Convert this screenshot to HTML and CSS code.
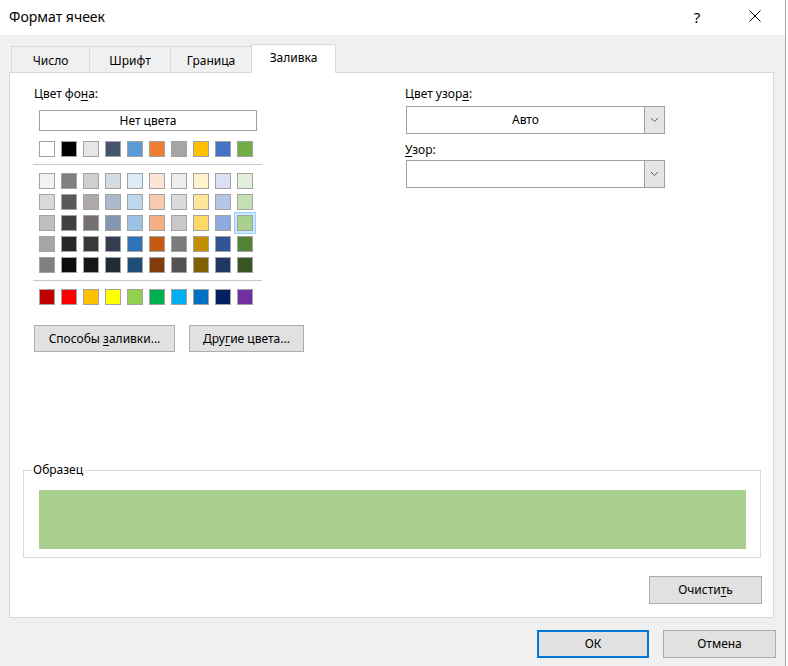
FILE: index.html
```html
<!DOCTYPE html>
<html lang="ru">
<head>
<meta charset="utf-8">
<title>Формат ячеек</title>
<link rel="stylesheet" href="styles.css">
</head>
<body>
<div class="window">
  <header class="titlebar">
    <span class="title">Формат ячеек</span>
    <span class="help">?</span>
    <span class="close"><svg width="12" height="12" viewBox="0 0 12 12"><path d="M0.5 0.5 L11.5 11.5 M11.5 0.5 L0.5 11.5" stroke="#000" stroke-width="1" fill="none"/></svg></span>
  </header>
  <div class="content">
    <nav class="tabs">
      <div class="tab t1">Число</div>
      <div class="tab t2">Шрифт</div>
      <div class="tab t3">Граница</div>
      <div class="tab t4 active">Заливка</div>
    </nav>
    <section class="panel">
      <div class="top">
        <div class="bgcol">
          <div class="label">Цвет фо<u>н</u>а:</div>
          <div class="nocolor">Нет цвета</div>
          <div class="swrow">
            <span class="sw" style="background:#ffffff"></span>
            <span class="sw" style="background:#000000"></span>
            <span class="sw" style="background:#e7e6e6"></span>
            <span class="sw" style="background:#44546a"></span>
            <span class="sw" style="background:#5b9bd5"></span>
            <span class="sw" style="background:#ed7d31"></span>
            <span class="sw" style="background:#a5a5a5"></span>
            <span class="sw" style="background:#ffc000"></span>
            <span class="sw" style="background:#4472c4"></span>
            <span class="sw" style="background:#70ad47"></span>
          </div>
          <div class="sep"></div>
          <div class="grid">
            <span class="sw" style="background:#f2f2f2"></span>
            <span class="sw" style="background:#7f7f7f"></span>
            <span class="sw" style="background:#d0cece"></span>
            <span class="sw" style="background:#d6dce4"></span>
            <span class="sw" style="background:#ddebf7"></span>
            <span class="sw" style="background:#fce4d6"></span>
            <span class="sw" style="background:#ededed"></span>
            <span class="sw" style="background:#fff2cc"></span>
            <span class="sw" style="background:#d9e1f2"></span>
            <span class="sw" style="background:#e2efda"></span>

            <span class="sw" style="background:#d9d9d9"></span>
            <span class="sw" style="background:#595959"></span>
            <span class="sw" style="background:#aeaaaa"></span>
            <span class="sw" style="background:#acb9ca"></span>
            <span class="sw" style="background:#bdd7ee"></span>
            <span class="sw" style="background:#f8cbad"></span>
            <span class="sw" style="background:#dbdbdb"></span>
            <span class="sw" style="background:#ffe699"></span>
            <span class="sw" style="background:#b4c6e7"></span>
            <span class="sw" style="background:#c6e0b4"></span>

            <span class="sw" style="background:#bfbfbf"></span>
            <span class="sw" style="background:#404040"></span>
            <span class="sw" style="background:#757171"></span>
            <span class="sw" style="background:#8497b0"></span>
            <span class="sw" style="background:#9bc2e6"></span>
            <span class="sw" style="background:#f4b084"></span>
            <span class="sw" style="background:#c9c9c9"></span>
            <span class="sw" style="background:#ffd966"></span>
            <span class="sw" style="background:#8ea9db"></span>
            <span class="sw selected" style="background:#a9d08e"></span>

            <span class="sw" style="background:#a6a6a6"></span>
            <span class="sw" style="background:#262626"></span>
            <span class="sw" style="background:#3a3838"></span>
            <span class="sw" style="background:#333f4f"></span>
            <span class="sw" style="background:#2f75b5"></span>
            <span class="sw" style="background:#c65911"></span>
            <span class="sw" style="background:#7b7b7b"></span>
            <span class="sw" style="background:#bf8f00"></span>
            <span class="sw" style="background:#305496"></span>
            <span class="sw" style="background:#548235"></span>

            <span class="sw" style="background:#808080"></span>
            <span class="sw" style="background:#0d0d0d"></span>
            <span class="sw" style="background:#161616"></span>
            <span class="sw" style="background:#222b35"></span>
            <span class="sw" style="background:#1f4e78"></span>
            <span class="sw" style="background:#833c0c"></span>
            <span class="sw" style="background:#525252"></span>
            <span class="sw" style="background:#806000"></span>
            <span class="sw" style="background:#203764"></span>
            <span class="sw" style="background:#375623"></span>
          </div>
          <div class="sep"></div>
          <div class="swrow">
            <span class="sw" style="background:#c00000"></span>
            <span class="sw" style="background:#ff0000"></span>
            <span class="sw" style="background:#ffc000"></span>
            <span class="sw" style="background:#ffff00"></span>
            <span class="sw" style="background:#92d050"></span>
            <span class="sw" style="background:#00b050"></span>
            <span class="sw" style="background:#00b0f0"></span>
            <span class="sw" style="background:#0070c0"></span>
            <span class="sw" style="background:#002060"></span>
            <span class="sw" style="background:#7030a0"></span>
          </div>
        </div>
        <div class="patcol">
          <div class="label">Цвет узор<u>а</u>:</div>
          <div class="select">
            <span class="val">Авто</span>
            <span class="arrow"><svg width="9" height="6" viewBox="0 0 9 6"><path d="M1 1 L4.5 4.5 L8 1" stroke="#606060" stroke-width="1" fill="none"/></svg></span>
          </div>
          <div class="label l2"><u>У</u>зор:</div>
          <div class="select">
            <span class="val"></span>
            <span class="arrow"><svg width="9" height="6" viewBox="0 0 9 6"><path d="M1 1 L4.5 4.5 L8 1" stroke="#606060" stroke-width="1" fill="none"/></svg></span>
          </div>
        </div>
      </div>
      <div class="fillbtns">
        <button class="btn b-fill">Способы <u>з</u>аливки...</button>
        <button class="btn b-more">Дру<u>г</u>ие цвета...</button>
      </div>
      <fieldset class="sample">
        <legend>Образец</legend>
        <div class="preview"></div>
      </fieldset>
      <div class="clearrow"><button class="btn b-clear">Очисти<u>т</u>ь</button></div>
    </section>
    <footer class="footer">
      <button class="btn ok">ОК</button>
      <button class="btn cancel">Отмена</button>
    </footer>
  </div>
</div>
</body>
</html>
```

FILE: styles.css
```css
* { box-sizing: border-box; }
html, body { margin: 0; padding: 0; background: #ffffff; }
body {
  font-family: "Noto Sans", "Open Sans", sans-serif;
  font-size: 12px;
  color: #000;
}
u { text-decoration: underline; text-underline-offset: 2px; }

.window {
  width: 786px;
  height: 666px;
  overflow: hidden;
  background: #f0f0f0;
  border-right: 1px solid #a8a8a8;
  display: flex;
  flex-direction: column;
}

.titlebar {
  height: 35px;
  background: #ffffff;
  display: flex;
  align-items: center;
  padding-left: 9px;
  flex: none;
}
.title { flex: 1; font-size: 14px; line-height: 20px; margin-top: -1px; }
.help { width: 14px; text-align: center; font-size: 15px; line-height: 20px; margin-right: 45px; margin-top: -1px; }
.close { width: 12px; height: 12px; margin-right: 24px; margin-bottom: 3px; display: flex; }

.content { padding-top: 9px; flex: 1; display: flex; flex-direction: column; }

.tabs {
  display: flex;
  align-items: flex-start;
  height: 29px;
  margin-left: 11px;
  margin-bottom: -1px;
}
.tab {
  height: 26px;
  margin-top: 2px;
  border: 1px solid #d9d9d9;
  border-bottom: none;
  background: #f0f0f0;
  display: flex;
  align-items: center;
  justify-content: center;
  line-height: 16px;
  padding-top: 2px;
}
.t1 { width: 79px; }
.t2 { width: 82px; margin-left: -1px; }
.t3 { width: 82px; margin-left: -1px; }
.t4 { width: 85px; margin-left: -1px; }
.tab.active {
  height: 29px;
  margin-top: 0;
  background: #ffffff;
  position: relative;
  z-index: 1;
  padding-top: 0;
  padding-bottom: 2px;
}

.panel {
  margin-left: 9px;
  width: 765px;
  height: 546px;
  border: 1px solid #d9d9d9;
  background: #ffffff;
  display: flex;
  flex-direction: column;
  padding: 13px 0 13px 0;
}

.top {
  display: grid;
  grid-template-columns: 371px 260px;
  padding-left: 24px;
}
.label { height: 16px; line-height: 16px; }

.nocolor {
  margin: 8px 0 0 5px;
  width: 218px;
  height: 21px;
  border: 1px solid #a0a0a0;
  text-align: center;
  line-height: 19px;
}
.swrow {
  display: flex;
  gap: 6px;
  padding-left: 5px;
  margin-top: 10px;
}
.sep + .swrow { margin-top: 8px; }
.sw {
  width: 16px;
  height: 16px;
  border: 1px solid #a3a3a3;
  display: block;
}
.sw.selected {
  box-shadow: 0 0 0 2px #cce8ff, 0 0 0 3px #99d1ff;
}
.sep {
  margin: 7px 0 0 -1px;
  width: 229px;
  height: 1px;
  background: #c8c8c8;
}
.grid {
  display: grid;
  grid-template-columns: repeat(10, 16px);
  column-gap: 6px;
  row-gap: 5px;
  padding-left: 5px;
  margin-top: 8px;
}

.patcol { display: flex; flex-direction: column; }
.select {
  margin: 4px 0 0 1px;
  width: 259px;
  height: 28px;
  border: 1px solid #a0a0a0;
  display: flex;
  background: #ffffff;
}
.l2 { margin-top: 8px; }
.l2 + .select { margin-top: 2px; }
.val { flex: 1; text-align: center; line-height: 26px; }
.arrow {
  width: 20px;
  background: #e5e5e5;
  border-left: 1px solid #a0a0a0;
  display: flex;
  align-items: center;
  justify-content: center;
}

.btn {
  font-family: inherit;
  font-size: 12px;
  color: #000;
  background: #e1e1e1;
  border: 1px solid #adadad;
  padding: 0;
  height: 28px;
  line-height: 16px;
}
.fillbtns {
  display: flex;
  gap: 14px;
  margin: 20px 0 0 24px;
}
.b-fill { width: 141px; height: 27px; }
.b-more { width: 115px; height: 27px; }

.sample {
  margin: auto 0 0 13px;
  width: 738px;
  border: 1px solid #dcdcdc;
  padding: 0 14px 8px 15px;
  min-width: 0;
}
.sample legend {
  padding: 0 1px;
  margin-left: -7px;
  line-height: 16px;
  font-size: 12px;
}
.preview {
  margin-top: 12px;
  height: 59px;
  background: #a9d08e;
}
.clearrow {
  display: flex;
  justify-content: flex-end;
  margin: 18px 11px 0 0;
}
.b-clear { width: 113px; }

.footer {
  display: flex;
  justify-content: flex-end;
  gap: 14px;
  margin-top: 12px;
  padding-right: 9px;
}
.ok { width: 112px; border: 2px solid #0078d7; }
.cancel { width: 113px; }
```
